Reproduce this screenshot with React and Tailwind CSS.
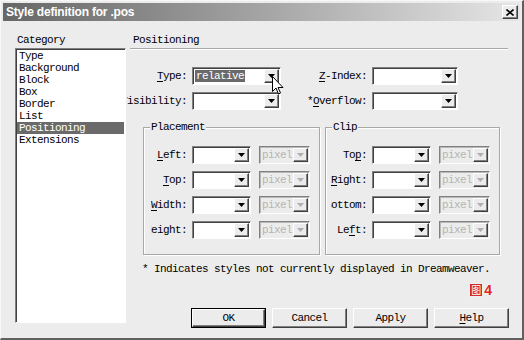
import React from 'react';

const mono = "font-['Liberation_Mono','DejaVu_Sans_Mono',monospace] text-[11px] tracking-[-0.6px] leading-[12px] text-black";

const Tri = ({ disabled }) => (
  <svg width="7" height="4" viewBox="0 0 7 4">
    <path d="M0 0h7L3.5 4z" fill={disabled ? '#b0b0b0' : '#000'} />
  </svg>
);

const DropBtn = ({ disabled }) => (
  <div className="w-[15px] h-full flex items-center justify-center bg-[#ececec] border border-t-white border-l-white border-r-[#404040] border-b-[#404040] shadow-[inset_-1px_-1px_0_#808080]">
    <Tri disabled={disabled} />
  </div>
);

const Combo = ({ className = '', disabled, children }) => (
  <div
    className={`flex h-[18px] p-px border border-t-[#808080] border-l-[#808080] border-r-white border-b-white ${
      disabled ? 'bg-[#ececec] shadow-[inset_1px_1px_0_#b8b8b8]' : 'bg-white shadow-[inset_1px_1px_0_#404040]'
    } ${className}`}
  >
    <div className="flex-1 flex items-center pl-px overflow-hidden">{children}</div>
    <DropBtn disabled={disabled} />
  </div>
);

const U = ({ children }) => <span className="underline underline-offset-2">{children}</span>;

// labels are right aligned and clipped on the left, like the original dialog
const Label = ({ className = '', children }) => (
  <div className={`flex justify-end overflow-hidden whitespace-nowrap ${className}`}>
    <span>{children}</span>
  </div>
);

const BoxRow = ({ label }) => (
  <div className="flex items-center h-[18px]">
    <Label className="w-[36px]">{label}</Label>
    <Combo className="ml-[5px] w-[59px]" />
    <Combo className="ml-[8px] w-[51px]" disabled>
      <span className="text-[#b4b4b4]">pixel</span>
    </Combo>
  </div>
);

const Button = ({ children, isDefault }) => (
  <div className={`w-[75px] h-[20px] ${isDefault ? 'border border-black' : ''}`}>
    <div className="w-full h-full flex items-center justify-center bg-[#ececec] border border-t-white border-l-white border-r-[#404040] border-b-[#404040] shadow-[inset_-1px_-1px_0_#808080]">
      {children}
    </div>
  </div>
);

const categories = ['Type', 'Background', 'Block', 'Box', 'Border', 'List', 'Positioning', 'Extensions'];

export default function App() {
  return (
    <div className={`w-[524px] h-[340px] bg-[#ececec] flex flex-col overflow-hidden border-t border-l border-t-[#f8f8f8] border-l-[#f8f8f8] border-r-2 border-b-2 border-r-[#606060] border-b-[#606060] ${mono}`}>
      {/* title bar */}
      <div className="mx-[2px] mt-[2px] h-[18px] flex items-center bg-linear-to-r from-[#676767] to-[#e6e6e6]">
        <span className="pl-[3px] text-white font-bold text-[12px] tracking-[-0.2px] font-['Liberation_Sans',Arial,sans-serif]">
          Style definition for .pos
        </span>
        <div className="ml-auto mr-[2px] w-[16px] h-[14px] flex items-center justify-center bg-[#ececec] border border-t-white border-l-white border-r-[#404040] border-b-[#404040] shadow-[inset_-1px_-1px_0_#808080]">
          <svg width="8" height="7" viewBox="0 0 8 7">
            <path d="M0.5 0.5l7 6M7.5 0.5l-7 6" stroke="#000" strokeWidth="1.6" />
          </svg>
        </div>
      </div>

      <div className="flex">
        {/* category column */}
        <div className="pl-[14px] flex flex-col">
          <div className="mt-[13px] pl-[2px] h-[12px]">Category</div>
          <div className="mt-[2px] w-[111px] h-[275px] bg-white p-px border border-t-[#808080] border-l-[#808080] border-r-white border-b-white shadow-[inset_1px_1px_0_#404040]">
            {categories.map((c) => (
              <div
                key={c}
                className={`h-[12px] pl-[2px] ${c === 'Positioning' ? 'bg-[#6a6a6a] text-white' : ''}`}
              >
                {c}
              </div>
            ))}
          </div>
        </div>

        {/* positioning panel */}
        <div className="ml-[4px] w-[384px] flex flex-col">
          <div className="mt-[13px] pl-[3px] h-[12px]">Positioning</div>
          <div className="mt-[2px] w-[378px] h-[2px] border-t border-b border-t-[#a8a8a8] border-b-white" />

          <div className="mt-[17px] flex items-center h-[18px]">
            <Label className="-ml-[3px] w-[60px]"><U>T</U>ype:</Label>
            <div className="relative ml-[5px]">
              <Combo className="w-[89px]">
                <span className="bg-[#6a6a6a] text-white px-px">relative</span>
              </Combo>
              <svg className="absolute left-[80px] top-[9px]" width="12" height="19" viewBox="0 0 12 19">
                <path d="M0.5 0.5v15l3.5-3.5 2.5 6 2-1-2.5-5.5h5z" fill="#fff" stroke="#000" strokeWidth="1" />
              </svg>
            </div>
            <Label className="w-[86px]"><U>Z</U>-Index:</Label>
            <Combo className="ml-[5px] w-[86px]" />
          </div>

          <div className="mt-[7px] flex items-center h-[18px]">
            <Label className="-ml-[3px] w-[60px]">Visibility:</Label>
            <Combo className="ml-[5px] w-[89px]" />
            <Label className="w-[86px]">*<U>O</U>verflow:</Label>
            <Combo className="ml-[5px] w-[86px]" />
          </div>

          <div className="mt-[17px] ml-[13px] flex gap-[5px]">
            <div className="relative w-[177px] h-[128px] border border-[#a8a8a8] shadow-[inset_1px_1px_0_#fff,1px_1px_0_#fff] pt-[18px] pl-[7px] flex flex-col gap-[7px]">
              <span className="absolute left-[6px] -top-[7px] px-px bg-[#ececec]">Placement</span>
              <BoxRow label={<><U>L</U>eft:</>} />
              <BoxRow label={<><U>T</U>op:</>} />
              <BoxRow label={<><U>W</U>idth:</>} />
              <BoxRow label={<>Height:</>} />
            </div>
            <div className="relative w-[175px] h-[128px] border border-[#a8a8a8] shadow-[inset_1px_1px_0_#fff,1px_1px_0_#fff] pt-[18px] pl-[5px] flex flex-col gap-[7px]">
              <span className="absolute left-[6px] -top-[7px] px-px bg-[#ececec]">Clip</span>
              <BoxRow label={<>To<U>p</U>:</>} />
              <BoxRow label={<><U>R</U>ight:</>} />
              <BoxRow label={<>Bottom:</>} />
              <BoxRow label={<>Le<U>f</U>t:</>} />
            </div>
          </div>

          <div className="mt-[8px] pl-[12px] h-[12px] whitespace-nowrap">
            * Indicates styles not currently displayed in Dreamweaver.
          </div>

          <div className="mt-[9px] h-[12px] flex justify-end items-center pr-[22px] gap-[2px]">
            <span className="w-[12px] h-[12px] flex items-center justify-center bg-[#d42a2a] text-white text-[10px] leading-none tracking-normal font-['Noto_Sans_CJK_SC',sans-serif] shadow-[0_0_1px_#fff]">
              图
            </span>
            <span className="text-[#e02424] font-bold text-[14px] leading-none tracking-normal font-['Liberation_Sans',Arial,sans-serif] [text-shadow:0_0_1px_#fff,0_0_2px_#fff]">
              4
            </span>
          </div>

          <div className="mt-[12px] pl-[61px] flex gap-[6px]">
            <Button isDefault>OK</Button>
            <Button>Cancel</Button>
            <Button>Apply</Button>
            <Button><span><U>H</U>elp</span></Button>
          </div>
        </div>
      </div>
    </div>
  );
}
